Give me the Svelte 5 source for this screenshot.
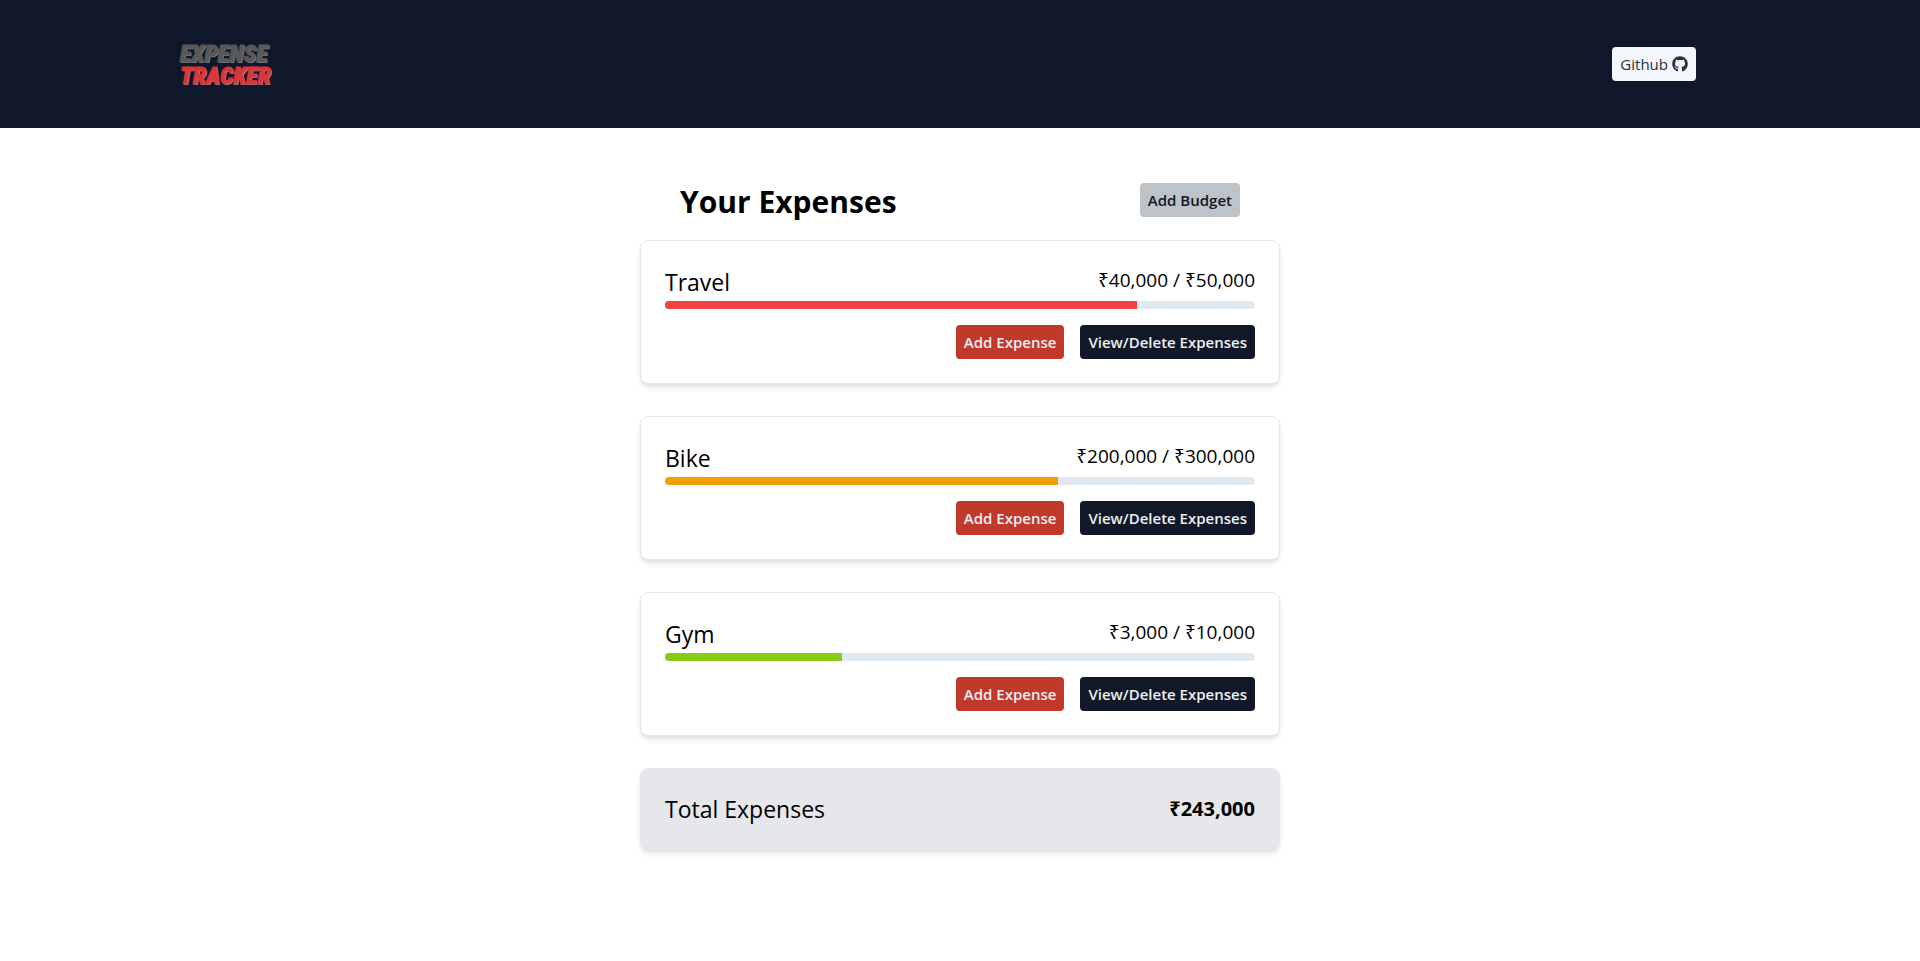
<script>
  const budgets = [
    { name: 'Travel', spent: 40000, max: 50000 },
    { name: 'Bike', spent: 200000, max: 300000 },
    { name: 'Gym', spent: 3000, max: 10000 }
  ];

  const total = budgets.reduce((sum, b) => sum + b.spent, 0);
  const money = (n) => '₹' + n.toLocaleString('en-US');
  const share = (b) => (b.spent / b.max) * 100;

  function level(b) {
    const ratio = b.spent / b.max;
    if (ratio < 0.5) return 'low';
    if (ratio < 0.75) return 'mid';
    return 'high';
  }
</script>

<header class="topbar">
  <div class="topbar-inner">
    <div class="logo">
      <span class="logo-top">EXPENSE</span>
      <span class="logo-bottom">TRACKER</span>
    </div>
    <a class="btn github" href="#github">
      Github
      <svg viewBox="0 0 496 512" width="16" height="16" aria-hidden="true">
        <path
          fill="currentColor"
          d="M165.9 397.4c0 2-2.3 3.6-5.2 3.6-3.3.3-5.6-1.3-5.6-3.6 0-2 2.3-3.6 5.2-3.6 3-.3 5.6 1.3 5.6 3.6zm-31.1-4.5c-.7 2 1.3 4.3 4.3 4.9 2.6 1 5.6 0 6.2-2s-1.3-4.3-4.3-5.2c-2.6-.7-5.5.3-6.2 2.3zm44.2-1.7c-2.9.7-4.9 2.6-4.6 4.9.3 2 2.9 3.3 5.9 2.6 2.9-.7 4.9-2.6 4.6-4.6-.3-1.9-3-3.2-5.9-2.9zM244.8 8C106.1 8 0 113.3 0 252c0 110.9 69.8 205.8 169.5 239.2 12.8 2.3 17.3-5.6 17.3-12.1 0-6.2-.3-40.4-.3-61.4 0 0-70 15-84.7-29.8 0 0-11.4-29.1-27.8-36.6 0 0-22.9-15.7 1.6-15.4 0 0 24.9 2 38.6 25.8 21.9 38.6 58.6 27.5 72.9 20.9 2.3-16 8.8-27.1 16-33.7-55.9-6.2-112.3-14.3-112.3-110.5 0-27.5 7.6-41.3 23.6-58.9-2.6-6.5-11.1-33.3 2.6-67.9 20.9-6.5 69 27 69 27 20-5.6 41.5-8.5 62.8-8.5s42.8 2.9 62.8 8.5c0 0 48.1-33.6 69-27 13.7 34.7 5.2 61.4 2.6 67.9 16 17.7 25.8 31.5 25.8 58.9 0 96.5-58.9 104.2-114.8 110.5 9.2 7.9 17 22.9 17 46.4 0 33.7-.3 75.4-.3 83.6 0 6.5 4.6 14.4 17.3 12.1C428.2 457.8 496 362.9 496 252 496 113.3 383.5 8 244.8 8z"
        />
      </svg>
    </a>
  </div>
</header>

<main>
  <div class="heading">
    <h1>Your Expenses</h1>
    <button class="btn budget" type="button">Add Budget</button>
  </div>

  <div class="cards">
    {#each budgets as b}
      <section class="card">
        <div class="row">
          <h2>{b.name}</h2>
          <p class="amount">{money(b.spent)} / {money(b.max)}</p>
        </div>
        <div class="track">
          <div class="fill {level(b)}" style="width: {share(b)}%"></div>
        </div>
        <div class="actions">
          <button class="btn add" type="button">Add Expense</button>
          <button class="btn view" type="button">View/Delete Expenses</button>
        </div>
      </section>
    {/each}

    <section class="card total">
      <h2>Total Expenses</h2>
      <p class="amount sum">{money(total)}</p>
    </section>
  </div>
</main>

<style>
  :global(body) {
    margin: 0;
    background: #fff;
    color: #000;
    font-family: 'Segoe UI', 'Open Sans', 'Noto Sans', sans-serif;
    font-size: 15px;
  }

  h1,
  h2,
  p {
    margin: 0;
  }

  .topbar {
    background: #0f172a;
  }

  .topbar-inner {
    display: flex;
    align-items: center;
    justify-content: space-between;
    width: 83.3333%;
    min-height: 128px;
    margin: 0 auto;
    padding: 0 64px 0 20px;
    box-sizing: border-box;
  }

  .logo {
    display: flex;
    flex-direction: column;
    padding-top: 2px;
    font: italic 900 24px/22px 'Roboto Condensed', 'Roboto', sans-serif;
    text-shadow: 1px 1px 0 #8d8d90;
  }

  .logo-top {
    color: #58585a;
    -webkit-text-stroke: 1px #58585a;
  }

  .logo-bottom {
    color: #d8363a;
    -webkit-text-stroke: 1px #d8363a;
  }

  .btn {
    display: inline-flex;
    align-items: center;
    gap: 4px;
    height: 34px;
    padding: 0 8px;
    border: 0;
    border-radius: 4px;
    box-sizing: border-box;
    font-family: inherit;
    font-size: 15px;
    line-height: 24px;
    text-decoration: none;
    white-space: nowrap;
    cursor: pointer;
  }

  .github {
    background: #f3f6fa;
    color: #27303f;
  }

  .budget {
    background: #bdc3c7;
    color: #111827;
    font-weight: 600;
  }

  .add,
  .view {
    color: #ecf0f1;
    font-weight: 600;
  }

  .add {
    background: #c0392b;
  }

  .view {
    background: #111827;
  }

  main {
    width: 640px;
    max-width: 100%;
    margin: 0 auto;
    padding: 46px 0;
  }

  .heading {
    display: flex;
    align-items: center;
    justify-content: space-between;
    padding: 0 40px 14px;
  }

  h1 {
    padding-top: 4px;
    font-size: 30px;
    line-height: 48px;
    font-weight: 700;
  }

  .cards {
    display: flex;
    flex-direction: column;
    gap: 32px;
  }

  .card {
    padding: 24px;
    border: 1px solid #e5e7eb;
    border-radius: 8px;
    background: #fff;
    box-shadow:
      0 4px 6px -1px rgba(0, 0, 0, 0.1),
      0 2px 4px -2px rgba(0, 0, 0, 0.1);
  }

  .row {
    display: flex;
    justify-content: space-between;
    padding-bottom: 2px;
  }

  h2 {
    font-size: 23px;
    line-height: 34px;
    font-weight: 500;
  }

  .amount {
    font-size: 19px;
    line-height: 30px;
    font-weight: 400;
  }

  .track {
    height: 8px;
    overflow: hidden;
    border-radius: 4px;
    background: #e2e8f0;
  }

  .fill {
    height: 100%;
  }

  .low {
    background: #84cc16;
  }

  .mid {
    background: #f59e0b;
  }

  .high {
    background: #ef4444;
  }

  .actions {
    display: flex;
    justify-content: flex-end;
    gap: 16px;
    margin-top: 16px;
  }

  .total {
    display: flex;
    align-items: center;
    justify-content: space-between;
    background: #e5e7eb;
  }

  .total h2,
  .total .amount {
    line-height: 32px;
  }

  .total .sum {
    font-size: 20px;
    font-weight: 700;
  }
</style>
